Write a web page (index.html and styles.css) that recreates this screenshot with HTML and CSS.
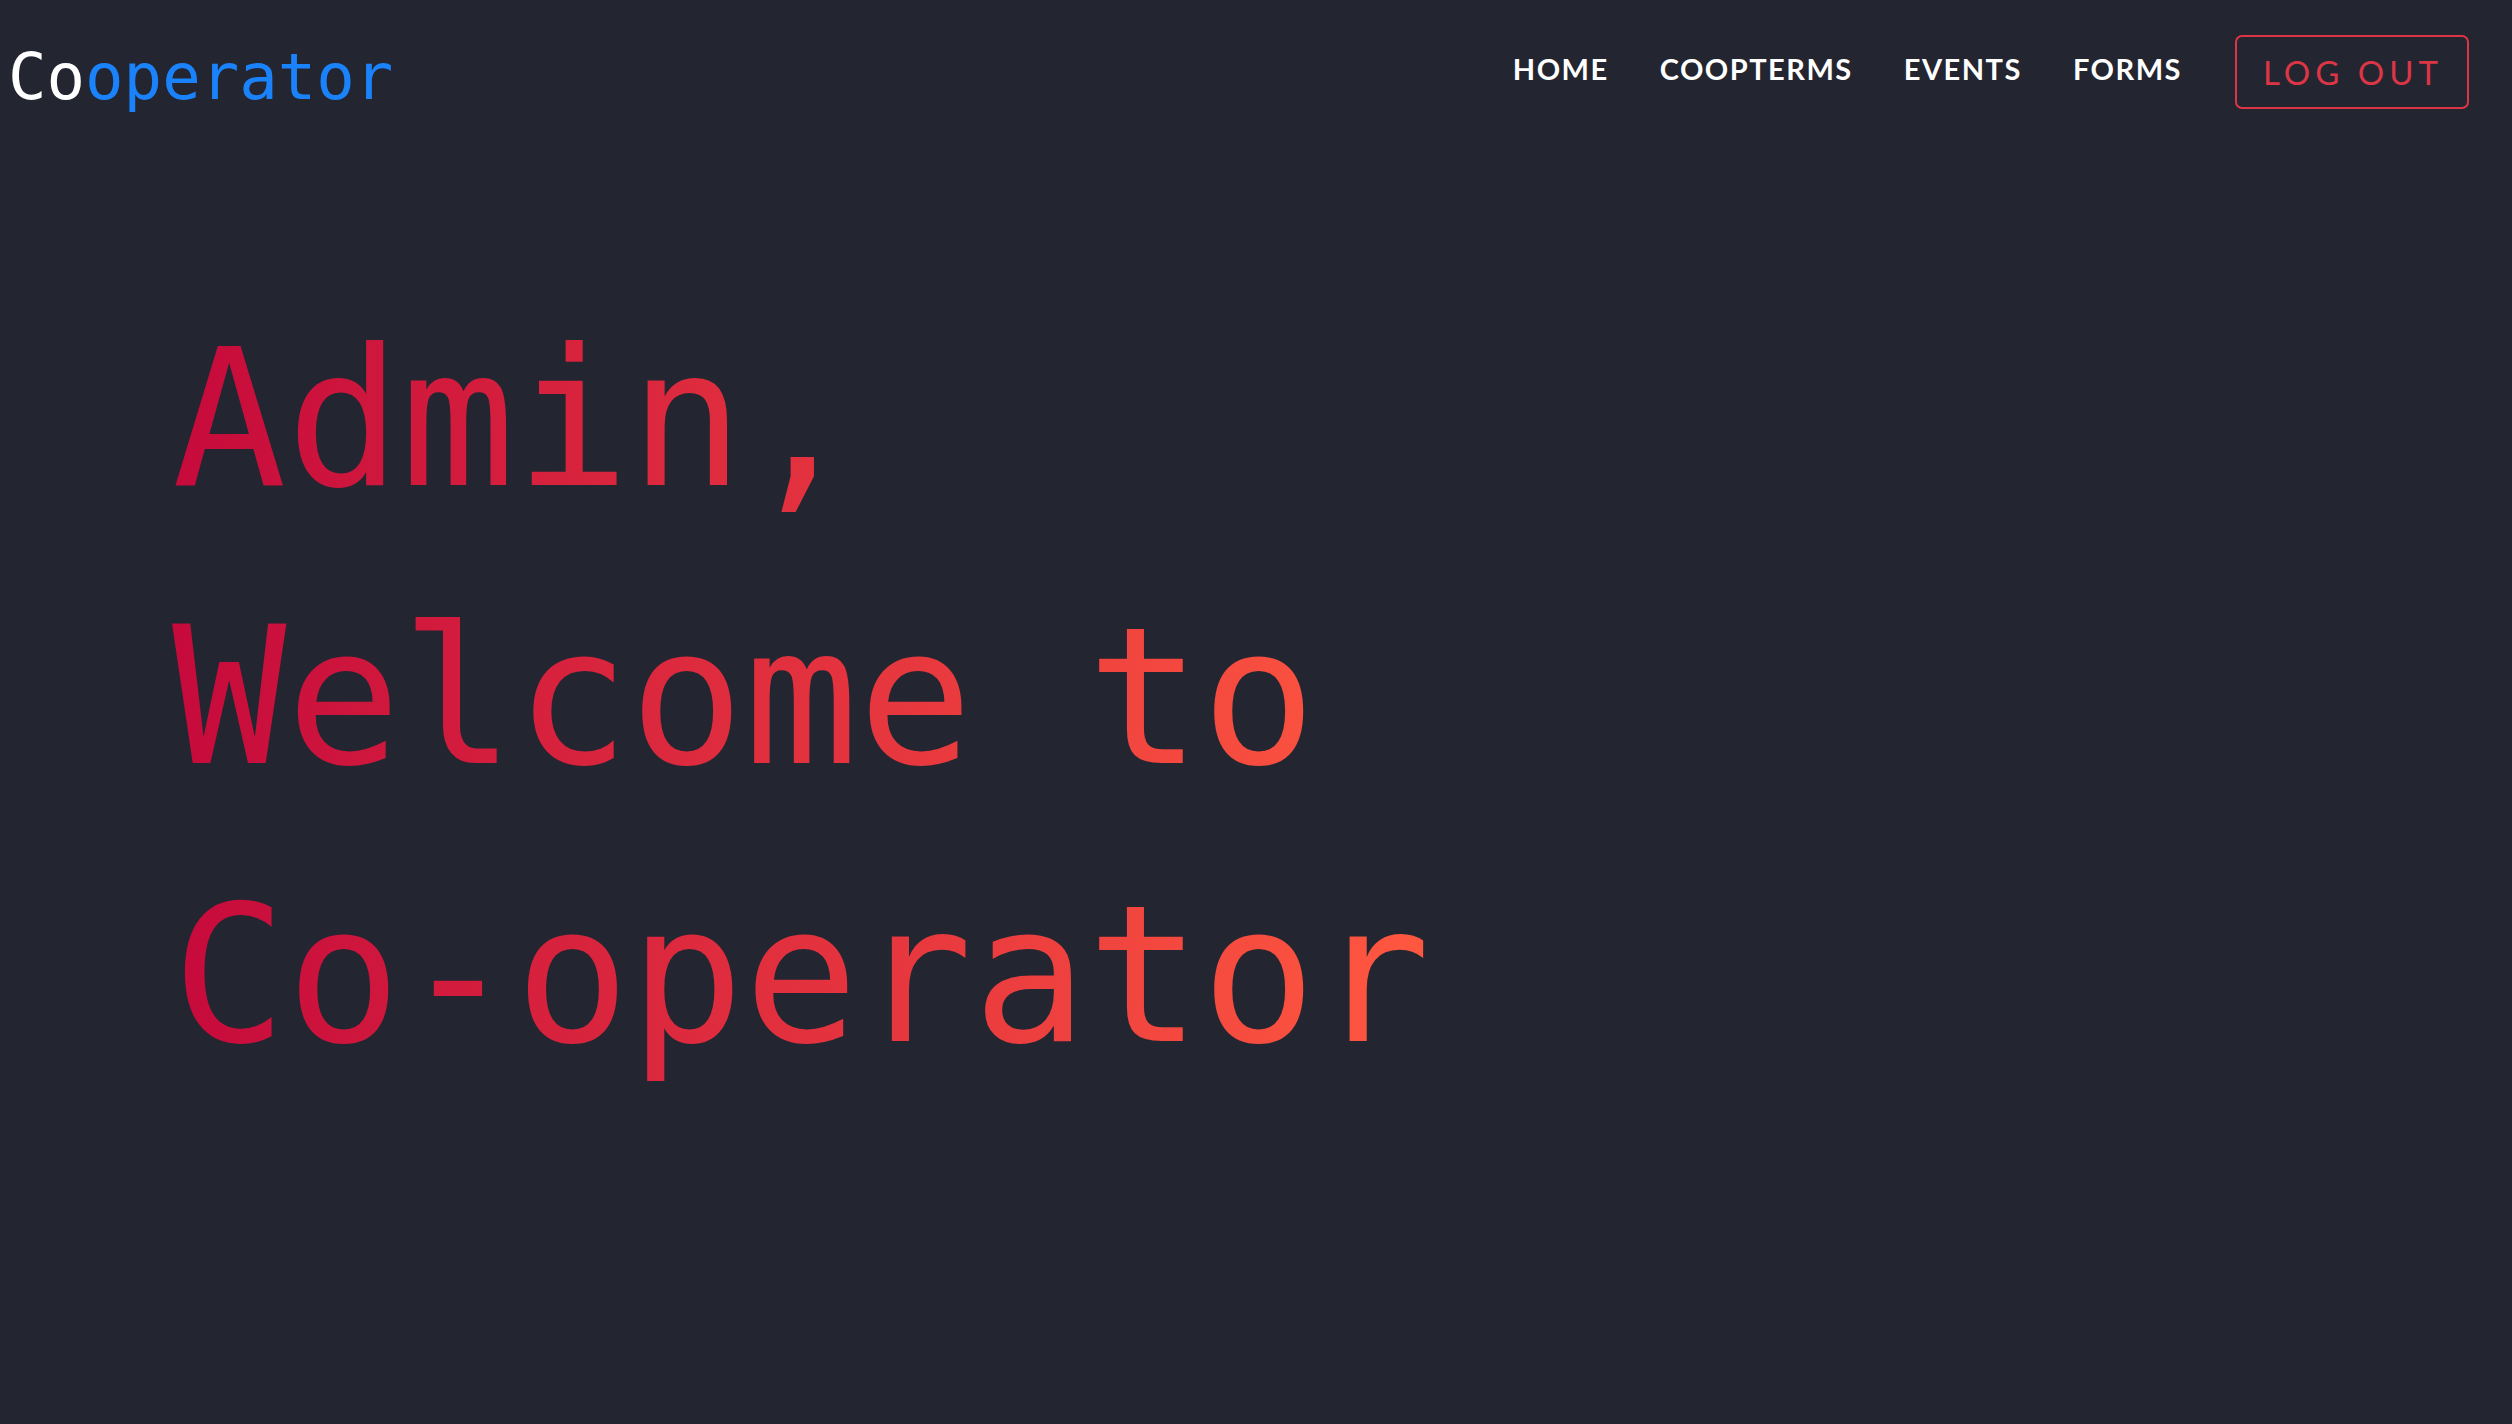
FILE: index.html
```html
<!DOCTYPE html>
<html lang="en">
<head>
<meta charset="utf-8">
<title>Cooperator</title>
<link rel="stylesheet" href="styles.css">
</head>
<body>
<header class="navbar">
  <a class="brand" href="#"><span class="brand-co">Co</span><span class="brand-rest">operator</span></a>
  <nav class="nav">
    <a class="nav-link" href="#">HOME</a>
    <a class="nav-link" href="#">COOPTERMS</a>
    <a class="nav-link" href="#">EVENTS</a>
    <a class="nav-link" href="#">FORMS</a>
    <a class="logout" href="#">LOG OUT</a>
  </nav>
</header>
<main class="hero">
  <h1 class="welcome"><span class="line">Admin,</span><span class="line">Welcome to</span><span class="line">Co-operator</span></h1>
</main>
</body>
</html>
```
FILE: styles.css
```css
html, body {
  margin: 0;
  padding: 0;
  background: #232530;
  height: 100%;
}
body {
  font-family: "Lato", "Liberation Sans", sans-serif;
  color: #fff;
}
a { text-decoration: none; }

.navbar {
  display: flex;
  justify-content: space-between;
  align-items: center;
  padding: 35px 43px 0 8px;
  height: 74px;
}
.brand {
  font-family: "DejaVu Sans Mono", "Liberation Mono", monospace;
  font-size: 64px;
  line-height: 1;
  margin-top: 10px;
}
.brand-co { color: #ffffff; }
.brand-rest { color: #1a82fb; }

.nav {
  display: flex;
  align-items: center;
  gap: 51px;
}
.nav-link {
  color: #ffffff;
  font-size: 29px;
  font-weight: 700;
  letter-spacing: 1.5px;
  margin-top: -7px;
}
.logout {
  display: flex;
  align-items: center;
  justify-content: center;
  box-sizing: border-box;
  width: 234px;
  height: 74px;
  margin-left: 2px;
  border: 2px solid #dc3545;
  border-radius: 7px;
  color: #dc3545;
  font-size: 33px;
  letter-spacing: 5px;
  padding-left: 2px;
}

.hero {
  padding: 172px 0 0 172px;
}
.welcome {
  margin: 0;
  display: inline-block;
  font-family: "DejaVu Sans Mono", "Liberation Mono", monospace;
  font-weight: 400;
  font-size: 190px;
  line-height: 278px;
  background: linear-gradient(to right, #c60a3c, #ff5840);
  -webkit-background-clip: text;
  background-clip: text;
  color: transparent;
}
.line { display: block; }
```
